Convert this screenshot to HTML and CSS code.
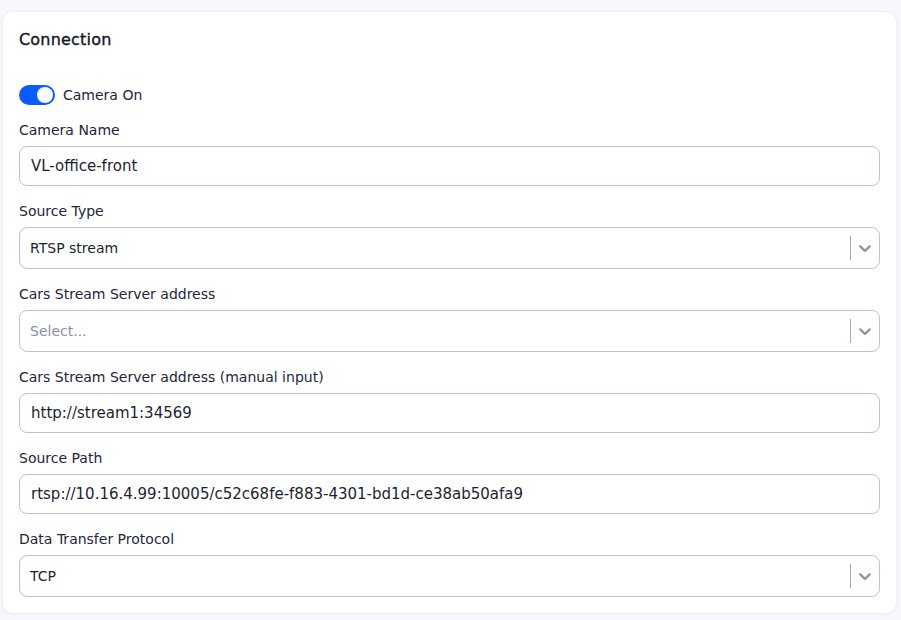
FILE: index.html
```html
<!DOCTYPE html>
<html lang="en">
<head>
<meta charset="utf-8">
<title>Connection</title>
<link rel="stylesheet" href="styles.css">
</head>
<body>
<section class="card">
  <h2 class="card-title">Connection</h2>

  <label class="switch-row">
    <span class="switch"><span class="switch-knob"></span></span>
    <span class="switch-label">Camera On</span>
  </label>

  <div class="field">
    <div class="field-label">Camera Name</div>
    <div class="input">VL-office-front</div>
  </div>

  <div class="field">
    <div class="field-label">Source Type</div>
    <div class="select">
      <span class="select-value">RTSP stream</span>
      <span class="select-sep"></span>
      <span class="select-arrow"><svg viewBox="0 0 20 20" width="20" height="20"><path d="M4.516 7.548c0.436-0.446 1.043-0.481 1.576 0l3.908 3.747 3.908-3.747c0.533-0.481 1.141-0.446 1.574 0 0.436 0.445 0.408 1.197 0 1.615-0.406 0.418-4.695 4.502-4.695 4.502-0.217 0.223-0.502 0.335-0.787 0.335s-0.57-0.112-0.789-0.335c0 0-4.287-4.084-4.695-4.502s-0.436-1.170 0-1.615z"/></svg></span>
    </div>
  </div>

  <div class="field">
    <div class="field-label">Cars Stream Server address</div>
    <div class="select">
      <span class="select-value placeholder">Select...</span>
      <span class="select-sep"></span>
      <span class="select-arrow"><svg viewBox="0 0 20 20" width="20" height="20"><path d="M4.516 7.548c0.436-0.446 1.043-0.481 1.576 0l3.908 3.747 3.908-3.747c0.533-0.481 1.141-0.446 1.574 0 0.436 0.445 0.408 1.197 0 1.615-0.406 0.418-4.695 4.502-4.695 4.502-0.217 0.223-0.502 0.335-0.787 0.335s-0.570-0.112-0.789-0.335c0 0-4.287-4.084-4.695-4.502s-0.436-1.170 0-1.615z"/></svg></span>
    </div>
  </div>

  <div class="field">
    <div class="field-label">Cars Stream Server address (manual input)</div>
    <div class="input">http://stream1:34569</div>
  </div>

  <div class="field">
    <div class="field-label">Source Path</div>
    <div class="input">rtsp://10.16.4.99:10005/c52c68fe-f883-4301-bd1d-ce38ab50afa9</div>
  </div>

  <div class="field">
    <div class="field-label">Data Transfer Protocol</div>
    <div class="select">
      <span class="select-value">TCP</span>
      <span class="select-sep"></span>
      <span class="select-arrow"><svg viewBox="0 0 20 20" width="20" height="20"><path d="M4.516 7.548c0.436-0.446 1.043-0.481 1.576 0l3.908 3.747 3.908-3.747c0.533-0.481 1.141-0.446 1.574 0 0.436 0.445 0.408 1.197 0 1.615-0.406 0.418-4.695 4.502-4.695 4.502-0.217 0.223-0.502 0.335-0.787 0.335s-0.570-0.112-0.789-0.335c0 0-4.287-4.084-4.695-4.502s-0.436-1.170 0-1.615z"/></svg></span>
    </div>
  </div>
</section>
</body>
</html>
```
FILE: styles.css
```css
* { box-sizing: border-box; }

html, body { height: 100%; }

body {
  margin: 0;
  padding: 12px 5px 0 3px;
  background: #f7f8fc;
  font-family: "DejaVu Sans", "Noto Sans", sans-serif;
  color: #23263a;
}

.card {
  background: #fff;
  border-radius: 10px;
  box-shadow: 0 0 0 1px #eef0f6, 0 1px 4px rgba(40, 50, 100, 0.06);
  padding: 17px 16px 16px;
}

.card-title {
  margin: 0 0 34px;
  font-size: 16px;
  line-height: 22px;
  font-weight: 500;
  color: #14161f;
  letter-spacing: 0.2px;
  -webkit-text-stroke: 0.35px #14161f;
}

.switch-row {
  display: flex;
  align-items: center;
  gap: 8px;
  height: 20px;
  margin-bottom: 15px;
}

.switch {
  width: 36px;
  height: 20px;
  border-radius: 10px;
  background: #0b5cff;
  display: flex;
  align-items: center;
  justify-content: flex-end;
  padding: 0 2px;
}

.switch-knob {
  width: 16px;
  height: 16px;
  border-radius: 50%;
  background: #fff;
}

.switch-label {
  font-size: 14px;
  color: #23263a;
}

.field { margin-bottom: 15px; }
.field:last-child { margin-bottom: 0; }

.field-label {
  font-size: 14px;
  line-height: 20px;
  margin-bottom: 6px;
  color: #23263a;
}

.input {
  height: 40px;
  border: 1px solid #bcc3d3;
  border-radius: 8px;
  padding: 0 11px;
  display: flex;
  align-items: center;
  font-size: 15px;
  color: #1c1f30;
}

.select {
  height: 42px;
  border: 1px solid #bcc3d3;
  border-radius: 8px;
  padding-left: 10px;
  display: flex;
  align-items: center;
}

.select-value {
  flex: 1;
  font-size: 14px;
  color: #1c1f30;
}

.select-value.placeholder { color: #8a90a2; }

.select-sep {
  width: 1px;
  height: 24px;
  background: #a2a9bc;
}

.select-arrow {
  width: 28px;
  display: flex;
  justify-content: center;
  fill: #8c94a8;
}

.select-arrow svg { display: block; }
```
